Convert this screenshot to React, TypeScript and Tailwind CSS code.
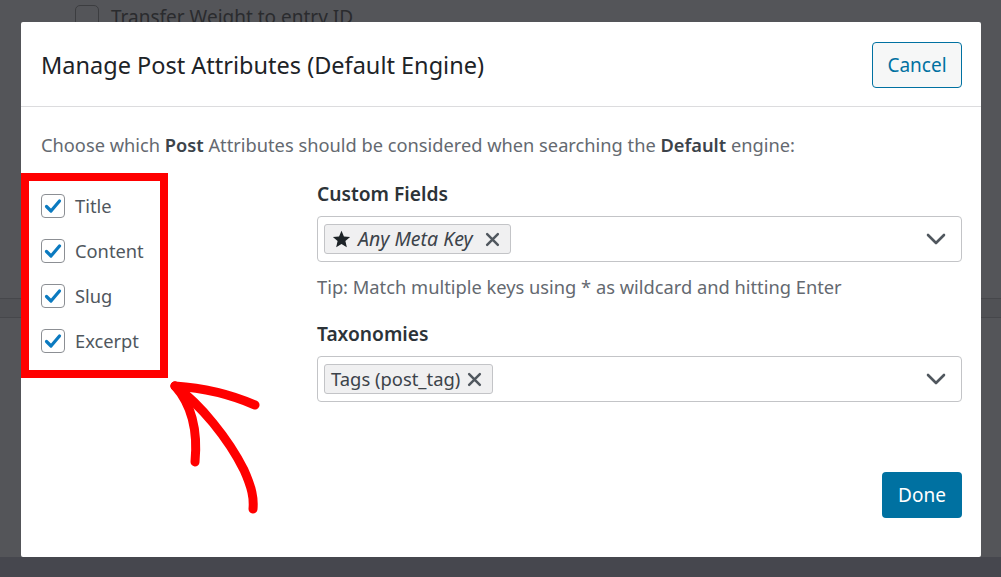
import React from "react";

const font = { fontFamily: '"Noto Sans", "Open Sans", sans-serif' };

function Check({ label }: { label: string }) {
  return (
    <div className="flex h-[45px] items-center gap-[10px]">
      <span className="flex h-[24px] w-[24px] items-center justify-center rounded-[4px] border border-[#8c8f94] bg-white">
        <svg width="18" height="16" viewBox="0 0 18 16">
          <path d="M2.5 8.5 L7 13 L15.5 3" fill="none" stroke="#0b7ac0" strokeWidth="3.2" strokeLinecap="round" strokeLinejoin="round" />
        </svg>
      </span>
      <span className="text-[18.3px] text-[#50575e]">{label}</span>
    </div>
  );
}

function Chevron() {
  return (
    <svg width="20" height="12" viewBox="0 0 20 12">
      <path d="M2 2 L10 10 L18 2" fill="none" stroke="#50575e" strokeWidth="2.6" strokeLinecap="round" strokeLinejoin="round" />
    </svg>
  );
}

function X() {
  return (
    <svg width="15" height="15" viewBox="0 0 14 14">
      <path d="M2 2 L12 12 M12 2 L2 12" fill="none" stroke="#50575e" strokeWidth="2.3" strokeLinecap="round" />
    </svg>
  );
}

export default function App() {
  return (
    <div style={font} className="relative h-[577px] w-[1001px] overflow-hidden bg-[#545559]">
      {/* underlying page (dimmed) */}
      <div className="flex items-center gap-[12px] pl-[75px] pt-[5px]">
        <span className="h-[24px] w-[24px] rounded-[5px] border border-[#3c3d40]" />
        <span className="text-[19px] leading-[24px] text-[#2a2b2e]">Transfer Weight to entry ID</span>
      </div>
      <div className="mt-[269px] h-[20px] border-y border-[#46474b] bg-[#505155]" />
      <div className="absolute bottom-0 left-0 right-0 h-[20px] bg-[#46474e]" />

      {/* modal */}
      <div className="absolute left-[21px] top-[22px] flex h-[535px] w-[960px] flex-col rounded-[2px] bg-white">
        <div className="flex h-[85px] items-center justify-between border-b border-[#dcdcde] pl-[20px] pr-[19px]">
          <h1 className="mt-[3px] text-[23.5px] font-normal text-[#1d2327]">Manage Post Attributes (Default Engine)</h1>
          <button className="mt-[2px] h-[46px] w-[90px] rounded-[4px] border border-[#0071a1] bg-[#f6f7f7] text-[19px] text-[#0071a1]">
            Cancel
          </button>
        </div>

        <div className="flex flex-1 flex-col pl-[20px] pr-[19px] pt-[26px]">
          <p className="text-[18.25px] leading-[24px] text-[#646970]">
            Choose which <b className="font-semibold text-[#3c434a]">Post</b> Attributes should be considered when searching the{" "}
            <b className="font-semibold text-[#3c434a]">Default</b> engine:
          </p>

          <div className="mt-[16px] flex">
            <div className="ml-[-20px] w-[296px]">
              <div className="w-[147px] border-[8px] border-[#ff0000] pb-[7px] pl-[12px] pt-[2px]">
                <Check label="Title" />
                <Check label="Content" />
                <Check label="Slug" />
                <Check label="Excerpt" />
              </div>
            </div>

            <div className="flex-1 pt-[8px]">
              <div className="text-[19.2px] font-semibold leading-[26px] text-[#2c3338]">Custom Fields</div>
              <div className="mt-[9px] flex h-[46px] items-center justify-between rounded-[4px] border border-[#c3c4c7] pl-[6px] pr-[15px]">
                <span className="flex h-[30px] items-center gap-[7px] rounded-[3px] border border-[#c3c4c7] bg-[#f0f0f1] pl-[7px] pr-[10px]">
                  <svg width="19" height="18" viewBox="0 0 24 23">
                    <path d="M12 1 L15.1 8.3 L23 9 L17 14.2 L18.8 22 L12 17.9 L5.2 22 L7 14.2 L1 9 L8.9 8.3 Z" fill="#1d2327" />
                  </svg>
                  <span className="text-[19.5px] italic text-[#3c434a]">Any Meta Key</span>
                  <span className="ml-[5px] flex"><X /></span>
                </span>
                <Chevron />
              </div>
              <p className="mt-[13px] text-[18.3px] leading-[24px] text-[#646970]">
                Tip: Match multiple keys using * as wildcard and hitting Enter
              </p>
              <div className="mt-[22px] text-[19.2px] font-semibold leading-[26px] text-[#2c3338]">Taxonomies</div>
              <div className="mt-[9px] flex h-[46px] items-center justify-between rounded-[4px] border border-[#c3c4c7] pl-[6px] pr-[15px]">
                <span className="flex h-[30px] items-center gap-[7px] rounded-[3px] border border-[#c3c4c7] bg-[#f0f0f1] pl-[6px] pr-[10px]">
                  <span className="text-[18.4px] text-[#3c434a]">Tags (post_tag)</span>
                  <X />
                </span>
                <Chevron />
              </div>
            </div>
          </div>

          <div className="mb-[39px] mt-auto flex justify-end">
            <button className="h-[46px] w-[80px] rounded-[4px] bg-[#0071a1] text-[19px] text-white">Done</button>
          </div>
        </div>
      </div>

      {/* hand-drawn arrow annotation */}
      <svg className="absolute left-[145px] top-[370px]" width="130" height="150" viewBox="145 370 130 150">
        <g fill="none" stroke="#ff0000" strokeWidth="9" strokeLinecap="round" strokeLinejoin="round">
          <path d="M175 386 C200 404 228 438 244 470 C252 488 254 498 253 509" />
          <path d="M175 386 C192 405 198 430 195 462" />
          <path d="M175 386 C205 388 232 395 255 405" />
        </g>
      </svg>
    </div>
  );
}
